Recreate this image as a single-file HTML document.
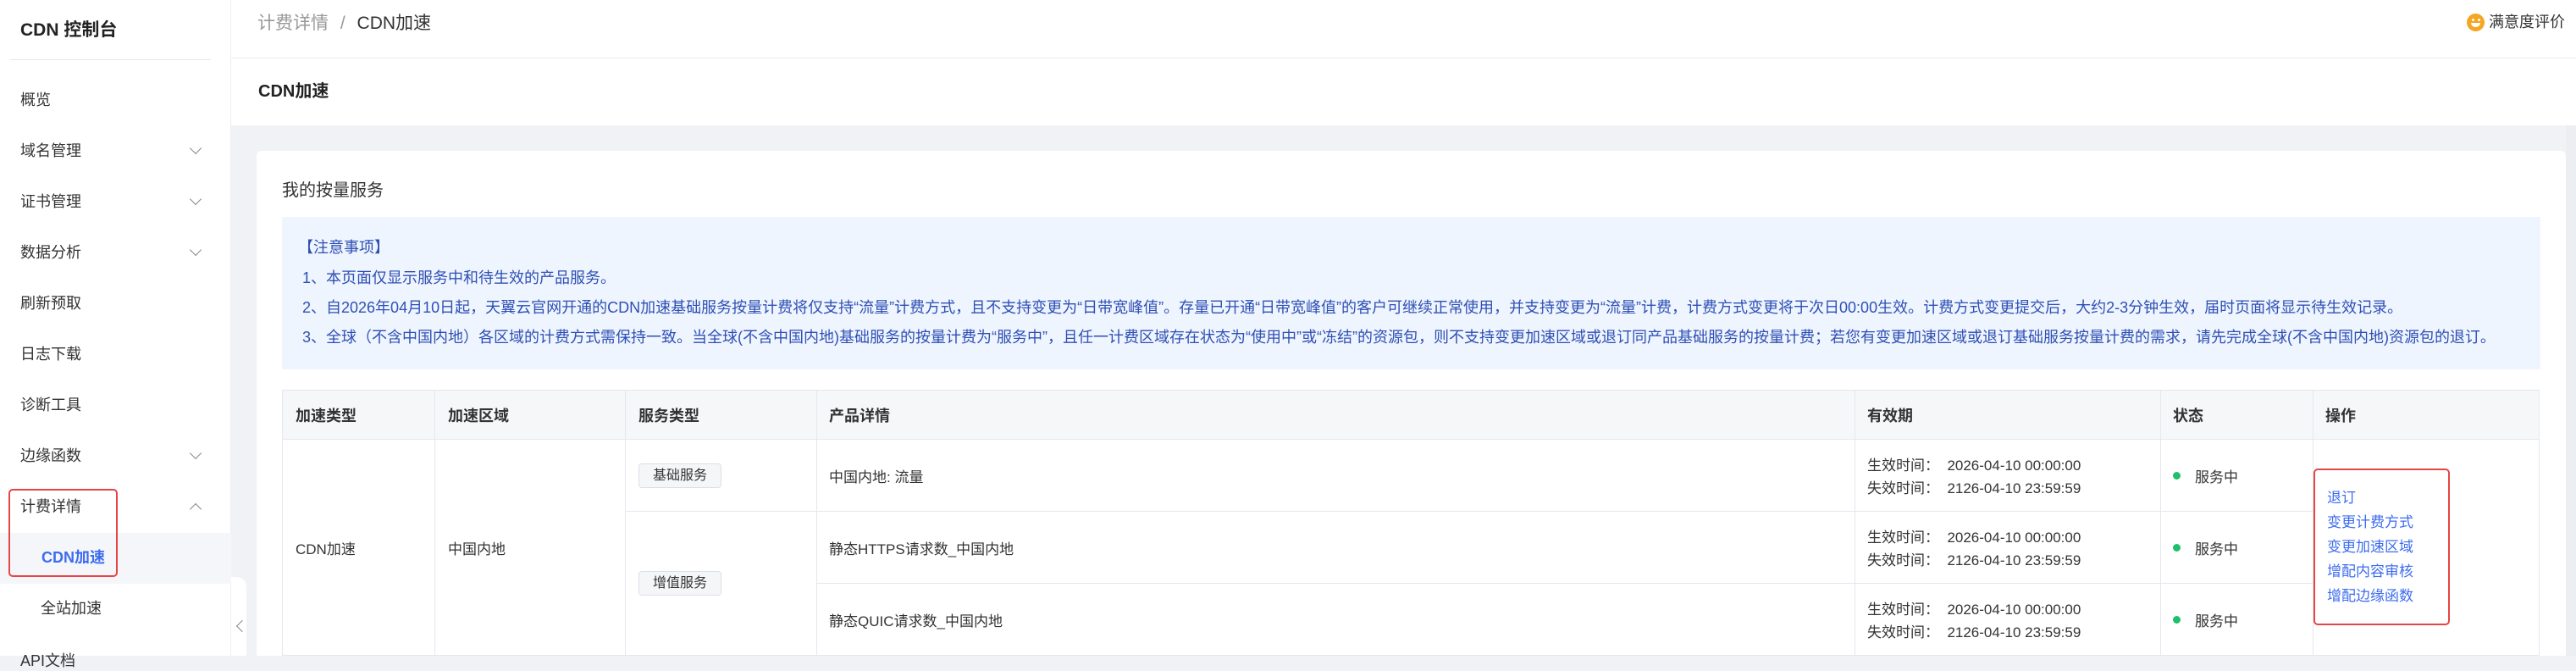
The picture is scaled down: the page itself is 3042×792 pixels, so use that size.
<!DOCTYPE html>
<html><head><meta charset="utf-8">
<style>
*{margin:0;padding:0;box-sizing:border-box}
body{width:3042px;height:774px;overflow:hidden;background:#f0f2f5;font-family:"Liberation Sans","Noto Sans CJK SC",sans-serif;color:#333;position:relative}
.a{position:absolute;white-space:nowrap}
.side{left:0;top:0;width:273px;height:774px;background:#fff;border-right:1px solid #eceef2}
.mi{left:24px;font-size:18px;color:#333;line-height:24px}
.chev{position:absolute;left:226px;width:10px;height:10px;border-right:1.6px solid #888;border-bottom:1.6px solid #888;transform:rotate(45deg)}
.chevu{transform:rotate(-135deg)}
.th{font-weight:bold;font-size:18px;color:#333}
.td{font-size:17px;color:#333}
.vl{position:absolute;width:1px;background:#e4e7ee}
.hl{position:absolute;height:1px;background:#e4e7ee}
.tag{position:absolute;left:754px;width:98px;height:29px;border:1px solid #dcdfe6;border-radius:4px;background:#f5f6f8;font-size:16px;line-height:27px;text-align:center;color:#333}
.nt{left:357px;font-size:18px;color:#2f4fb5;line-height:24px}
.dot{position:absolute;left:2566px;width:9px;height:9px;border-radius:50%;background:#1fc06b}
.lk{left:2748px;font-size:17px;color:#3d6cf0;line-height:22px}
</style></head><body>
<div class="a" style="left:273px;top:0;width:2769px;height:68px;background:#fff;box-shadow:0 2px 6px rgba(0,0,0,0.04)"></div>
<div class="a" style="left:304px;top:14px;font-size:21px;color:#999;line-height:28px">计费详情 <span style="margin:0 8px">/</span> <span style="color:#333">CDN加速</span></div>
<div class="a" style="left:2913px;top:16px;width:21px;height:21px;border-radius:50%;background:#f5a623"></div>
<div class="a" style="left:2919px;top:22px;width:3px;height:3px;background:#fff;border-radius:50%"></div>
<div class="a" style="left:2926px;top:22px;width:3px;height:3px;background:#fff;border-radius:50%"></div>
<div class="a" style="left:2918px;top:27px;width:11px;height:5px;border-radius:0 0 6px 6px;background:#fff"></div>
<div class="a" style="left:2939px;top:13px;font-size:18px;color:#333;line-height:26px">满意度评价</div>
<div class="a" style="left:273px;top:69px;width:2769px;height:79px;background:#fff"></div>
<div class="a" style="left:305px;top:95px;font-size:20px;font-weight:bold;color:#222;line-height:26px">CDN加速</div>
<div class="a" style="left:303px;top:178px;width:2727px;height:596px;background:#fff;border-radius:6px 6px 0 0"></div>
<div class="a" style="left:333px;top:212px;font-size:20px;color:#333;line-height:26px">我的按量服务</div>
<div class="a" style="left:333px;top:256px;width:2667px;height:180px;background:#eef5fe"></div>
<div class="a nt" style="left:352px;top:280px">【注意事项】</div>
<div class="a nt" style="top:316px">1、本页面仅显示服务中和待生效的产品服务。</div>
<div class="a nt" style="top:351px">2、自2026年04月10日起，天翼云官网开通的CDN加速基础服务按量计费将仅支持“流量”计费方式，且不支持变更为“日带宽峰值”。存量已开通“日带宽峰值”的客户可继续正常使用，并支持变更为“流量”计费，计费方式变更将于次日00:00生效。计费方式变更提交后，大约2-3分钟生效，届时页面将显示待生效记录。</div>
<div class="a nt" style="top:386px">3、全球（不含中国内地）各区域的计费方式需保持一致。当全球(不含中国内地)基础服务的按量计费为“服务中”，且任一计费区域存在状态为“使用中”或“冻结”的资源包，则不支持变更加速区域或退订同产品基础服务的按量计费；若您有变更加速区域或退订基础服务按量计费的需求，请先完成全球(不含中国内地)资源包的退订。</div>
<div class="a" style="left:333px;top:460px;width:2666px;height:58px;background:#f6f7f9"></div>
<div class="hl" style="left:333px;top:460px;width:2666px"></div>
<div class="hl" style="left:333px;top:518px;width:2666px"></div>
<div class="hl" style="left:738px;top:603px;width:1993px"></div>
<div class="hl" style="left:964px;top:688px;width:1767px"></div>
<div class="hl" style="left:333px;top:773px;width:2666px"></div>
<div class="vl" style="left:333px;top:460px;height:314px"></div>
<div class="vl" style="left:513px;top:460px;height:314px"></div>
<div class="vl" style="left:738px;top:460px;height:314px"></div>
<div class="vl" style="left:964px;top:460px;height:314px"></div>
<div class="vl" style="left:2190px;top:460px;height:314px"></div>
<div class="vl" style="left:2551px;top:460px;height:314px"></div>
<div class="vl" style="left:2731px;top:460px;height:314px"></div>
<div class="vl" style="left:2998px;top:460px;height:314px"></div>
<div class="a th" style="left:349px;top:477px">加速类型</div>
<div class="a th" style="left:529px;top:477px">加速区域</div>
<div class="a th" style="left:754px;top:477px">服务类型</div>
<div class="a th" style="left:979px;top:477px">产品详情</div>
<div class="a th" style="left:2205px;top:477px">有效期</div>
<div class="a th" style="left:2566px;top:477px">状态</div>
<div class="a th" style="left:2746px;top:477px">操作</div>
<div class="a td" style="left:349px;top:634px">CDN加速</div>
<div class="a td" style="left:529px;top:634px">中国内地</div>
<div class="tag" style="top:547px">基础服务</div>
<div class="tag" style="top:674px">增值服务</div>
<div class="a td" style="left:979px;top:549px">中国内地: 流量</div>
<div class="a td" style="left:979px;top:634px">静态HTTPS请求数_中国内地</div>
<div class="a td" style="left:979px;top:719px">静态QUIC请求数_中国内地</div>
<div class="a td" style="left:2205px;top:536px;line-height:27px">生效时间：&nbsp;&nbsp;2026-04-10 00:00:00<br>失效时间：&nbsp;&nbsp;2126-04-10 23:59:59</div>
<div class="a td" style="left:2205px;top:621px;line-height:27px">生效时间：&nbsp;&nbsp;2026-04-10 00:00:00<br>失效时间：&nbsp;&nbsp;2126-04-10 23:59:59</div>
<div class="a td" style="left:2205px;top:706px;line-height:27px">生效时间：&nbsp;&nbsp;2026-04-10 00:00:00<br>失效时间：&nbsp;&nbsp;2126-04-10 23:59:59</div>
<div class="dot" style="top:557px"></div><div class="a td" style="left:2592px;top:549px">服务中</div>
<div class="dot" style="top:642px"></div><div class="a td" style="left:2592px;top:634px">服务中</div>
<div class="dot" style="top:727px"></div><div class="a td" style="left:2592px;top:719px">服务中</div>
<div class="a" style="left:2732px;top:553px;width:161px;height:185px;border:2px solid #e64545;border-radius:5px"></div>
<div class="a lk" style="top:577px">退订</div>
<div class="a lk" style="top:606px">变更计费方式</div>
<div class="a lk" style="top:635px">变更加速区域</div>
<div class="a lk" style="top:664px">增配内容审核</div>
<div class="a lk" style="top:693px">增配边缘函数</div>
<div class="a" style="left:3030px;top:148px;width:12px;height:626px;background:#eceef1"></div>
<div class="a side"></div>
<div class="a" style="left:24px;top:22px;font-size:21px;font-weight:bold;color:#222;line-height:28px">CDN 控制台</div>
<div class="a" style="left:12px;top:70px;width:237px;height:1px;background:#e4e6ec"></div>
<div class="a mi" style="top:106px">概览</div>
<div class="a mi" style="top:166px">域名管理</div><div class="chev" style="top:170px"></div>
<div class="a mi" style="top:226px">证书管理</div><div class="chev" style="top:230px"></div>
<div class="a mi" style="top:286px">数据分析</div><div class="chev" style="top:290px"></div>
<div class="a mi" style="top:346px">刷新预取</div>
<div class="a mi" style="top:406px">日志下载</div>
<div class="a mi" style="top:466px">诊断工具</div>
<div class="a mi" style="top:526px">边缘函数</div><div class="chev" style="top:530px"></div>
<div class="a mi" style="top:586px">计费详情</div><div class="chev chevu" style="top:596px"></div>
<div class="a" style="left:0;top:629px;width:273px;height:60px;background:#f5f6f9"></div>
<div class="a mi" style="left:49px;top:646px;color:#3d6cf0;font-weight:bold">CDN加速</div>
<div class="a mi" style="left:48px;top:706px">全站加速</div>
<div class="a mi" style="top:768px">API文档</div>
<div class="a" style="left:10px;top:577px;width:129px;height:104px;border:2px solid #e64545;border-radius:5px"></div>
<div class="a" style="left:273px;top:681px;width:18px;height:93px;background:#fff;border-radius:0 12px 0 0"></div>
<div class="a" style="left:281px;top:734px;width:10px;height:10px;border-left:1.6px solid #888;border-bottom:1.6px solid #888;transform:rotate(45deg)"></div>
</body></html>
